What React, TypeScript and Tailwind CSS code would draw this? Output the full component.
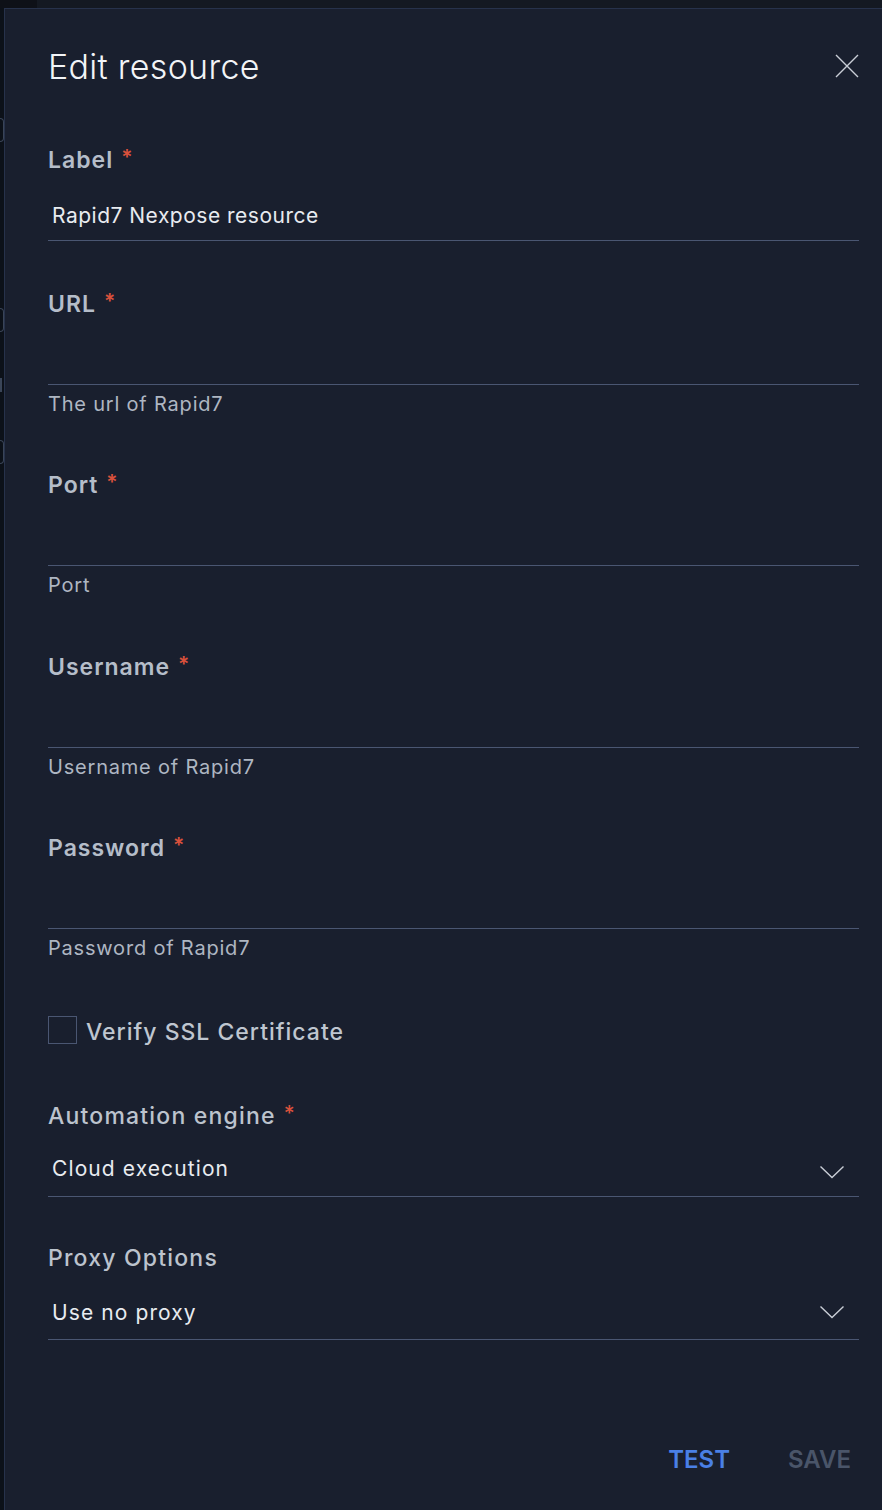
import React from "react";

const font = { fontFamily: "Inter, 'Noto Sans', sans-serif" };

function Req() {
  return <span className="ml-[8px] inline-block align-top text-[21px] leading-[24px] tracking-normal text-[#d9513c]">*</span>;
}

function Label({ text, req = true, medium = false }: { text: string; req?: boolean; medium?: boolean }) {
  return (
    <div
      className={
        medium
          ? "h-[30px] pt-[2px] text-[23px] font-medium leading-[28px] tracking-[1.2px] text-[#bcc3cd]"
          : "h-[30px] pt-[2px] text-[23px] font-semibold leading-[28px] tracking-[1px] text-[#b5bdc9]"
      }
    >
      {text}
      {req && <Req />}
    </div>
  );
}

function Input({ value }: { value?: string }) {
  return (
    <div className="h-[67px] border-b border-[#4a5672] pt-[28px] pl-[4px]">
      <div className="h-[28px] text-[21px] leading-[28px] tracking-[0.5px] text-[#e8ebf0]">{value ?? ""}</div>
    </div>
  );
}

function Helper({ text }: { text: string }) {
  return <div className="mt-[6px] h-[26px] text-[20px] leading-[26px] tracking-[0.8px] text-[#aeb6c2]">{text}</div>;
}

function Chevron() {
  return (
    <svg width="26" height="14" viewBox="0 0 26 14" fill="none" className="mr-[14px]">
      <polyline points="1.5,1.5 13,12.5 24.5,1.5" stroke="#c9ced6" strokeWidth="1.4" />
    </svg>
  );
}

function Select({ value, low = false }: { value: string; low?: boolean }) {
  return (
    <div
      className={
        low
          ? "flex h-[68px] items-start justify-between border-b border-[#4a5672] pt-[27px] pl-[4px]"
          : "flex h-[67px] items-start justify-between border-b border-[#4a5672] pt-[25px] pl-[4px]"
      }
    >
      <div className="h-[28px] text-[21px] leading-[28px] tracking-[1.1px] text-[#e8ebf0]">{value}</div>
      <div className={low ? "pt-[6px]" : "pt-[10px]"}>
        <Chevron />
      </div>
    </div>
  );
}

export default function App() {
  return (
    <div className="relative h-[1510px] w-[882px] overflow-hidden bg-[#0c1119]" style={font}>
      <div className="flex h-[8px]">
        <div className="w-[37px] bg-[#0e1118]" />
        <div className="flex-1 bg-[#141922]" />
      </div>
      <div className="flex h-[1502px]">
        <div className="relative w-[4px] bg-[#0c1119]">
          <div className="absolute left-0 top-[110px] h-[24px] w-[4px] rounded-r-full border border-l-0 border-[#3a4558]" />
          <div className="absolute left-0 top-[300px] h-[24px] w-[4px] rounded-r-full border border-l-0 border-[#3a4558]" />
          <div className="absolute left-0 top-[432px] h-[24px] w-[4px] rounded-r-full border border-l-0 border-[#3a4558]" />
          <div className="absolute left-0 top-[370px] h-[14px] w-[2px] bg-[#3a4558]" />
        </div>
        <div className="flex-1 border-l border-t border-[#27324b] bg-[#191f2e] pl-[43px] pr-[23px]">
          {/* header */}
          <div className="mt-[36px] flex h-[44px] items-center justify-between">
            <div className="text-[34px] font-light leading-[44px] tracking-[0.3px] text-[#f2f4f7]">Edit resource</div>
            <svg width="24" height="24" viewBox="0 0 24 24" fill="none" className="-mt-[2px]">
              <path d="M1 1 L23 23 M23 1 L1 23" stroke="#c9ced6" strokeWidth="1.4" />
            </svg>
          </div>

          {/* Label field */}
          <div className="mt-[55px]">
            <Label text="Label" />
            <Input value="Rapid7 Nexpose resource" />
          </div>

          <div className="mt-[47px]">
            <Label text="URL" />
            <Input />
            <Helper text="The url of Rapid7" />
          </div>

          <div className="mt-[52px]">
            <Label text="Port" />
            <Input />
            <Helper text="Port" />
          </div>

          <div className="mt-[53px]">
            <Label text="Username" />
            <Input />
            <Helper text="Username of Rapid7" />
          </div>

          <div className="mt-[52px]">
            <Label text="Password" />
            <Input />
            <Helper text="Password of Rapid7" />
          </div>

          <div className="mt-[55px] flex h-[28px] items-center">
            <div className="h-[28px] w-[29px] border border-[#4a5672]" />
            <div className="ml-[9px] mt-[3px] text-[23px] font-medium leading-[28px] tracking-[1px] text-[#bfc6d0]">
              Verify SSL Certificate
            </div>
          </div>

          <div className="mt-[56px]">
            <Label text="Automation engine" medium />
            <Select value="Cloud execution" />
          </div>

          <div className="mt-[45px]">
            <Label text="Proxy Options" req={false} medium />
            <Select value="Use no proxy" low />
          </div>

          <div className="mt-[104px] flex h-[32px] items-center justify-end pr-[8px]">
            <button className="text-[24px] font-semibold leading-[32px] text-[#4a80e6]">TEST</button>
            <button className="ml-[58px] text-[24px] font-semibold leading-[32px] text-[#4a5569]">SAVE</button>
          </div>
        </div>
      </div>
    </div>
  );
}
